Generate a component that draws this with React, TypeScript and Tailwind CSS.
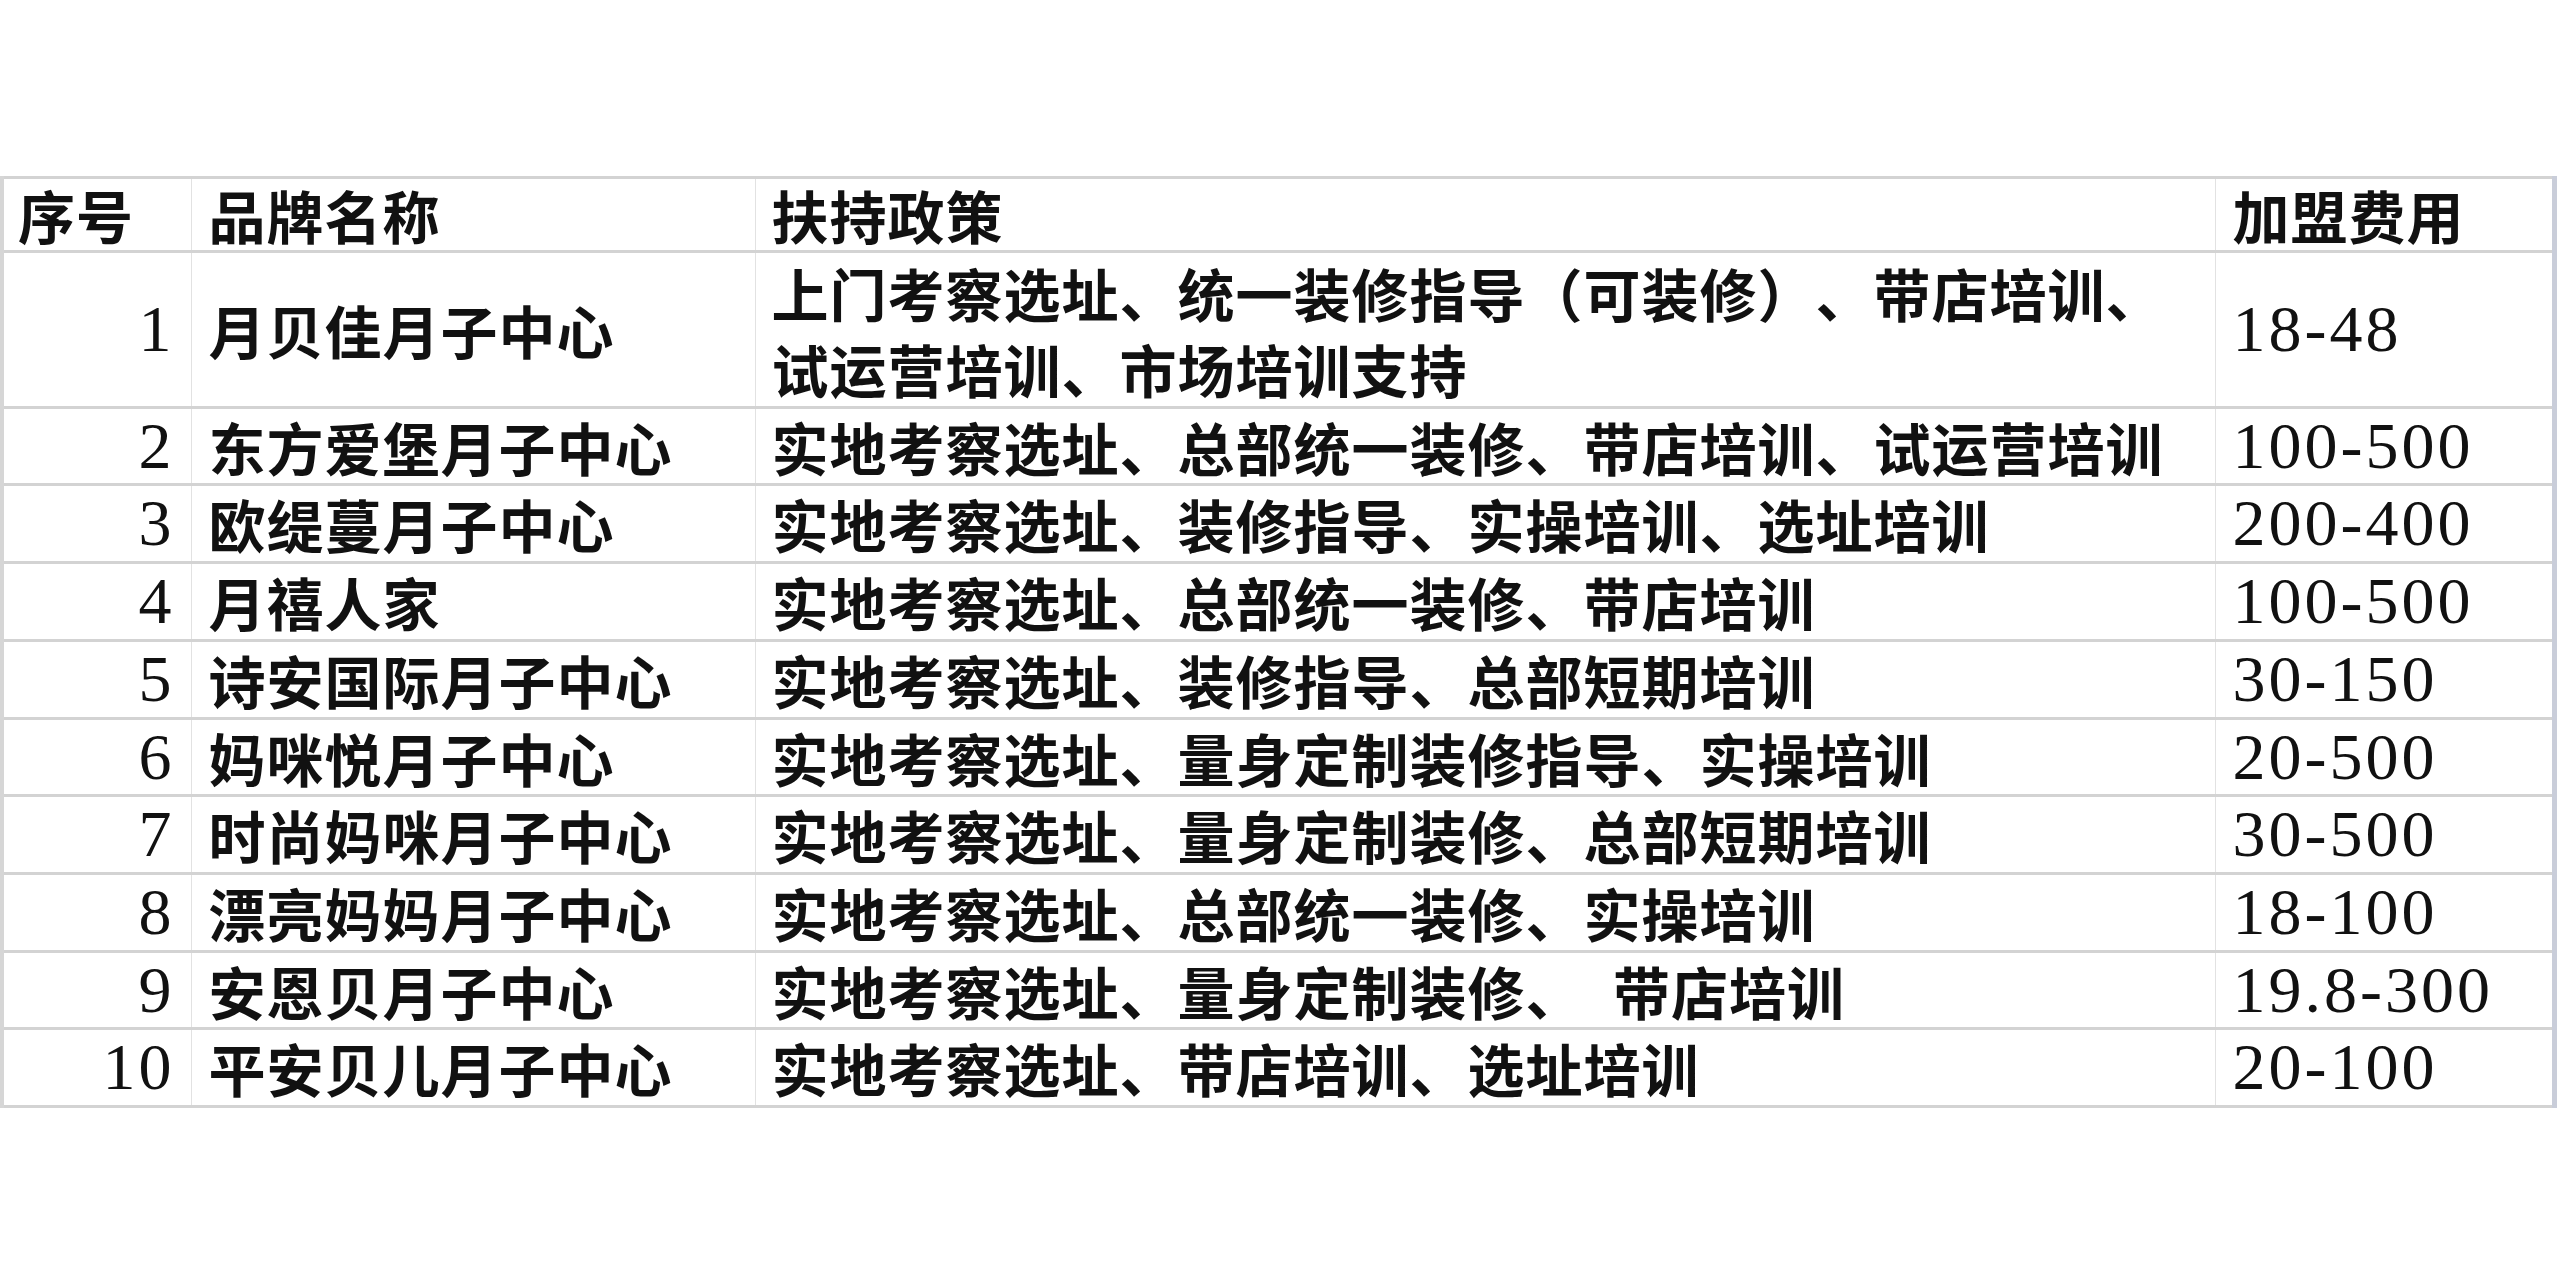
import React from 'react';

type Row = {
  no: number;
  brand: string;
  policy: string[];
  fee: string;
};

const rows: Row[] = [
  {
    no: 1,
    brand: '月贝佳月子中心',
    policy: ['上门考察选址、统一装修指导（可装修）、带店培训、', '试运营培训、市场培训支持'],
    fee: '18-48',
  },
  { no: 2, brand: '东方爱堡月子中心', policy: ['实地考察选址、总部统一装修、带店培训、试运营培训'], fee: '100-500' },
  { no: 3, brand: '欧缇蔓月子中心', policy: ['实地考察选址、装修指导、实操培训、选址培训'], fee: '200-400' },
  { no: 4, brand: '月禧人家', policy: ['实地考察选址、总部统一装修、带店培训'], fee: '100-500' },
  { no: 5, brand: '诗安国际月子中心', policy: ['实地考察选址、装修指导、总部短期培训'], fee: '30-150' },
  { no: 6, brand: '妈咪悦月子中心', policy: ['实地考察选址、量身定制装修指导、实操培训'], fee: '20-500' },
  { no: 7, brand: '时尚妈咪月子中心', policy: ['实地考察选址、量身定制装修、总部短期培训'], fee: '30-500' },
  { no: 8, brand: '漂亮妈妈月子中心', policy: ['实地考察选址、总部统一装修、实操培训'], fee: '18-100' },
  { no: 9, brand: '安恩贝月子中心', policy: ['实地考察选址、量身定制装修、\u2002带店培训'], fee: '19.8-300' },
  { no: 10, brand: '平安贝儿月子中心', policy: ['实地考察选址、带店培训、选址培训'], fee: '20-100' },
];

const cjk =
  "font-['Noto_Sans_CJK_SC','Noto_Sans_CJK_JP',sans-serif] font-semibold text-[57px] tracking-[1px] [text-spacing-trim:space-all]";
const num = "font-['Liberation_Serif','DejaVu_Serif',serif] text-[66px] tracking-[3px]";
const cell = 'p-0 align-middle border-x border-x-[#e2e2e2] border-y-[3px] border-y-[#d3d3d3]';

export default function App() {
  return (
    <div className="w-[2560px] h-[1280px] bg-white pt-[176px] overflow-hidden text-[#111]">
      <table className="w-[2552px] table-fixed border-collapse">
        <colgroup>
          <col className="w-[189px]" />
          <col className="w-[564px]" />
          <col className="w-[1460px]" />
          <col className="w-[339px]" />
        </colgroup>
        <thead>
          <tr>
            <th className={`${cell} ${cjk} border-l-[4px] border-l-[#d6d6d6] text-left leading-[71px] pl-[14px]`}>序号</th>
            <th className={`${cell} ${cjk} text-left leading-[71px] pl-[17px]`}>品牌名称</th>
            <th className={`${cell} ${cjk} text-left leading-[71px] pl-[16px]`}>扶持政策</th>
            <th className={`${cell} ${cjk} border-r-[5px] border-r-[#c9cdd9] text-left leading-[71px] pl-[17px]`}>
              加盟费用
            </th>
          </tr>
        </thead>
        <tbody>
          {rows.map((r) => (
            <tr key={r.no}>
              <td className={`${cell} ${num} border-l-[4px] border-l-[#d6d6d6] text-right leading-[74.7px] pr-[16px]`}>
                {r.no}
              </td>
              <td className={`${cell} ${cjk} text-left leading-[74.7px] pl-[17px] whitespace-nowrap`}>{r.brand}</td>
              <td className={`${cell} ${cjk} text-left leading-[74.7px] pl-[16px] whitespace-nowrap`}>
                {r.policy.map((line) => (
                  <div key={line} className="leading-[74.7px] first:leading-[78px] only:leading-[74.7px]">
                    {line}
                  </div>
                ))}
              </td>
              <td className={`${cell} ${num} border-r-[5px] border-r-[#c9cdd9] text-left leading-[74.7px] pl-[17px] whitespace-nowrap`}>
                {r.fee}
              </td>
            </tr>
          ))}
        </tbody>
      </table>
    </div>
  );
}
